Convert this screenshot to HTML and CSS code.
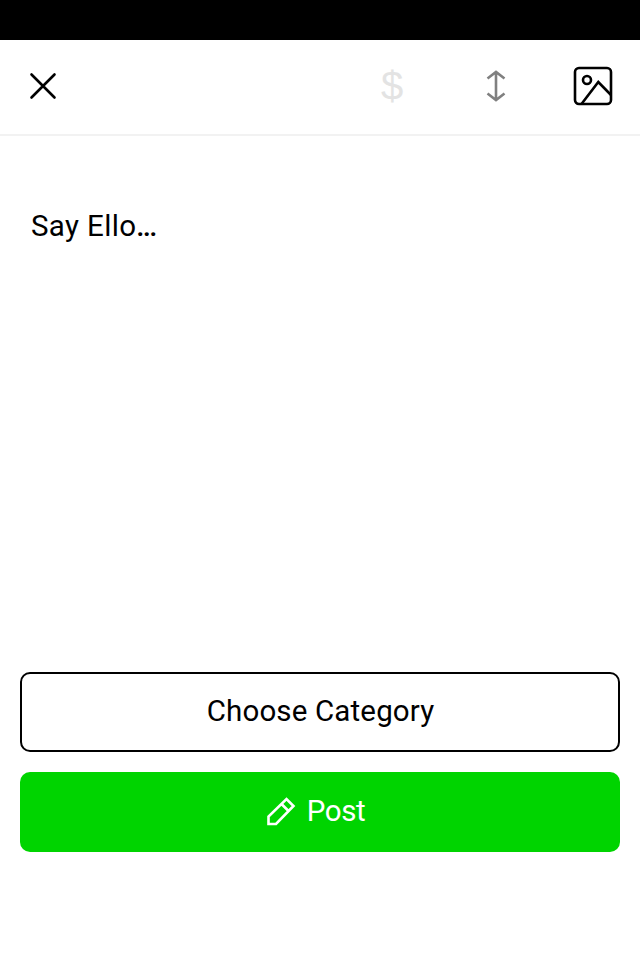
FILE: index.html
```html
<!DOCTYPE html>
<html lang="en">
<head>
<meta charset="utf-8">
<title>Ello</title>
<link rel="stylesheet" href="styles.css">
</head>
<body>
<div class="status"></div>
<header class="toolbar">
  <svg class="close" width="30" height="30" viewBox="0 0 30 30"><path d="M3.500 3.500 26.500 26.500M26.500 3.500 3.500 26.500"/></svg>
  <div class="tools">
    <span class="dollar">$</span>
    <svg class="reorder" width="22" height="34" viewBox="0 0 22 34"><path d="M11 3V31M2.500 9.500 11 3 19.500 9.500M2.500 24.500 11 31 19.500 24.500"/></svg>
    <svg class="image" width="40" height="40" viewBox="0 0 40 40"><rect x="2" y="2" width="36" height="36" rx="4"/><circle cx="14" cy="14" r="4"/><path d="M8.500 38 25.300 16 38 29"/></svg>
  </div>
</header>
<main class="editor"><p class="prompt">Say Ello<span class="dots">...</span></p></main>
<footer class="actions">
  <button class="btn category"><span>Choose Category</span></button>
  <button class="btn post"><svg width="30" height="30" viewBox="0 0 30 30"><path d="M2.500 27V19.500L20.500 2 27.500 9 10 27ZM15.500 7 22.500 14"/></svg><span>Post</span></button>
</footer>
</body>
</html>
```
FILE: styles.css
```css
* { box-sizing: border-box; }
body {
  margin: 0;
  height: 960px;
  display: flex;
  flex-direction: column;
  background: #fff;
  color: #000;
  font: 29.5px/40px Roboto, "Liberation Sans", sans-serif;
}
svg { display: block; fill: none; stroke: currentColor; stroke-width: 2.6; }
.status { height: 40px; background: #000; }
.toolbar {
  height: 96px;
  display: flex;
  justify-content: space-between;
  align-items: center;
  padding: 0 27px 2px 28px;
  border-bottom: 2px solid #f2f2f2;
}
.close { stroke-linecap: round; }
.tools { display: flex; align-items: center; }
.dollar {
  width: 24px;
  margin-right: 81px;
  text-align: center;
  color: #e3e3e3;
  font: 40px/40px "Liberation Sans", sans-serif;
}
.reorder { color: #808080; margin-right: 66px; }
.editor { flex: 1; padding: 70px 31px 0; }
.prompt { margin: 0; letter-spacing: 0.35px; }
.dots { font-weight: 500; letter-spacing: -1.8px; }
.actions {
  display: flex;
  flex-direction: column;
  gap: 20px;
  padding: 0 20px 108px;
}
.btn {
  height: 80px;
  display: flex;
  align-items: center;
  justify-content: center;
  border: 0;
  border-radius: 10px;
  padding: 0 0 2px;
  font: inherit;
  letter-spacing: 0.15px;
}
.category { background: #fff; color: #000; border: 2px solid #000; padding-left: 1px; }
.post { background: #00d400; color: #fff; gap: 11px; padding-right: 9px; letter-spacing: -0.4px; }
.post svg { margin-top: 2px; }
```
